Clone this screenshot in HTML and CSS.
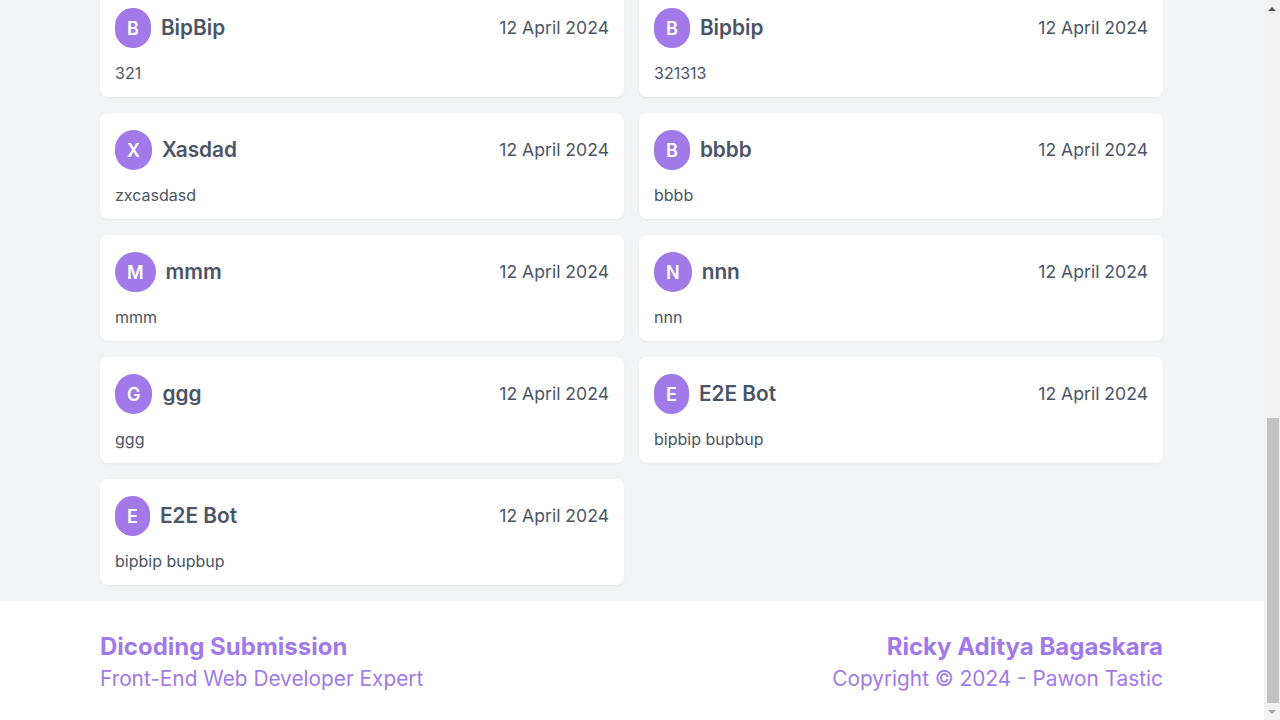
FILE: index.html
```html
<!DOCTYPE html>
<html lang="en">
<head>
<meta charset="utf-8">
<title>Threads</title>
<link rel="stylesheet" href="styles.css">
</head>
<body>
<header class="nav">
  <div class="nav-brand">Pawon Tastic</div>
  <nav class="nav-links"><a>Home</a><a>Threads</a><a>Login</a></nav>
</header>
<main class="main">
  <section class="intro">
    <h1 class="intro-title">Threads</h1>
    <form class="form-card">
      <label class="form-label">Nama</label>
      <input class="form-input" type="text" placeholder="Nama">
      <label class="form-label">Pesan</label>
      <textarea class="form-textarea" placeholder="Tulis pesan"></textarea>
      <button class="form-button" type="button">Kirim</button>
    </form>
  </section>
  <div class="grid">
    <article class="card"><div class="card-head"><span class="avatar">A</span><span class="card-name">Ayu</span><span class="card-date">12 April 2024</span></div><p class="card-text">halo semua</p></article>
    <article class="card"><div class="card-head"><span class="avatar">T</span><span class="card-name">Test</span><span class="card-date">12 April 2024</span></div><p class="card-text">test</p></article>
    <article class="card"><div class="card-head"><span class="avatar">Q</span><span class="card-name">qwe</span><span class="card-date">12 April 2024</span></div><p class="card-text">qwe</p></article>
    <article class="card"><div class="card-head"><span class="avatar">A</span><span class="card-name">asd</span><span class="card-date">12 April 2024</span></div><p class="card-text">asd</p></article>
    <article class="card"><div class="card-head"><span class="avatar">B</span><span class="card-name">BipBip</span><span class="card-date">12 April 2024</span></div><p class="card-text">321</p></article>
    <article class="card"><div class="card-head"><span class="avatar">B</span><span class="card-name">Bipbip</span><span class="card-date">12 April 2024</span></div><p class="card-text">321313</p></article>
    <article class="card"><div class="card-head"><span class="avatar">X</span><span class="card-name">Xasdad</span><span class="card-date">12 April 2024</span></div><p class="card-text">zxcasdasd</p></article>
    <article class="card"><div class="card-head"><span class="avatar">B</span><span class="card-name">bbbb</span><span class="card-date">12 April 2024</span></div><p class="card-text">bbbb</p></article>
    <article class="card"><div class="card-head"><span class="avatar">M</span><span class="card-name">mmm</span><span class="card-date">12 April 2024</span></div><p class="card-text">mmm</p></article>
    <article class="card"><div class="card-head"><span class="avatar">N</span><span class="card-name">nnn</span><span class="card-date">12 April 2024</span></div><p class="card-text">nnn</p></article>
    <article class="card"><div class="card-head"><span class="avatar">G</span><span class="card-name">ggg</span><span class="card-date">12 April 2024</span></div><p class="card-text">ggg</p></article>
    <article class="card"><div class="card-head"><span class="avatar">E</span><span class="card-name">E2E Bot</span><span class="card-date">12 April 2024</span></div><p class="card-text">bipbip bupbup</p></article>
    <article class="card"><div class="card-head"><span class="avatar">E</span><span class="card-name">E2E Bot</span><span class="card-date">12 April 2024</span></div><p class="card-text">bipbip bupbup</p></article>
  </div>
</main>
<footer class="footer">
  <div class="footer-left">
    <div class="footer-title">Dicoding Submission</div>
    <div class="footer-sub">Front-End Web Developer Expert</div>
  </div>
  <div class="footer-right">
    <div class="footer-title">Ricky Aditya Bagaskara</div>
    <div class="footer-sub">Copyright © 2024 - Pawon Tastic</div>
  </div>
</footer>
<div class="scrollbar" aria-hidden="true">
  <span class="scroll-arrow scroll-up"></span>
  <span class="scroll-track"><span class="scroll-thumb"></span></span>
  <span class="scroll-arrow scroll-down"></span>
</div>
<script src="script.js"></script>
</body>
</html>
```

FILE: styles.css
```css
* { box-sizing: border-box; }
html, body { margin: 0; padding: 0; }
body {
  background: #f3f4f6;
  font-family: Inter, "Liberation Sans", sans-serif;
  color: #4b5563;
  padding-right: 16px;
}
.nav {
  height: 64px;
  background: #ffffff;
  display: flex;
  align-items: center;
  justify-content: space-between;
  padding: 0 100px;
}
.nav-brand { font-size: 22px; font-weight: 700; color: #a179e8; }
.nav-links { display: flex; gap: 24px; font-size: 16px; }
.main { padding: 32px 101px 16px 100px; }
.intro { margin-bottom: 24px; }
.intro-title { margin: 0 0 16px; font-size: 30px; line-height: 40px; font-weight: 700; color: #374151; }
.form-card {
  background: #fff;
  border-radius: 8px;
  padding: 20px;
  display: flex;
  flex-direction: column;
  gap: 8px;
}
.form-label { font-size: 14px; font-weight: 600; }
.form-input, .form-textarea {
  font-family: inherit;
  font-size: 16px;
  border: 1px solid #d1d5db;
  border-radius: 6px;
  padding: 8px 12px;
}
.form-input { height: 40px; }
.form-textarea { height: 120px; resize: none; }
.form-button {
  align-self: flex-start;
  margin-top: 8px;
  background: #a179e8;
  color: #fff;
  border: 0;
  border-radius: 6px;
  padding: 10px 20px;
  font-family: inherit;
  font-size: 16px;
  font-weight: 600;
}
.grid {
  display: grid;
  grid-template-columns: 1fr 1fr;
  row-gap: 16px;
  column-gap: 15px;
}
.card {
  background: #ffffff;
  border-radius: 8px;
  box-shadow: 0 1px 2px rgba(0, 0, 0, 0.05);
  padding: 17px 15px 13px;
  height: 106px;
}
.card-head {
  display: flex;
  align-items: center;
  height: 40px;
}
.avatar {
  height: 40px;
  padding: 0 12px;
  border-radius: 9999px;
  background: #a179e8;
  color: #ffffff;
  font-size: 18px;
  font-weight: 600;
  display: flex;
  align-items: center;
  justify-content: center;
}
.card-name {
  margin-left: 10px;
  font-size: 20.8px;
  font-weight: 600;
  color: #4a5568;
  position: relative;
  top: -1px;
}
.card-date {
  margin-left: auto;
  font-size: 17.6px;
  color: #4a5568;
  position: relative;
  top: -1px;
}
.card-text {
  margin: 13px 0 0;
  font-size: 16px;
  line-height: 24px;
  color: #4b5563;
}
.footer {
  background: #ffffff;
  display: flex;
  justify-content: space-between;
  padding: 30px 101px 25px 100px;
  color: #a179e8;
}
.footer-right { text-align: right; }
.footer-title { font-size: 24px; line-height: 32px; font-weight: 700; }
.footer-sub { font-size: 20.8px; line-height: 32px; }
.scrollbar {
  position: fixed;
  top: 0;
  right: 0;
  width: 16px;
  height: 720px;
  background: #f1f1f1;
  display: flex;
  flex-direction: column;
  align-items: center;
}
.scroll-arrow {
  width: 16px;
  height: 17px;
  display: flex;
  align-items: center;
  justify-content: center;
  flex: none;
}
.scroll-up::before {
  content: "";
  border-left: 4px solid transparent;
  border-right: 4px solid transparent;
  border-bottom: 4px solid #505050;
}
.scroll-down::before {
  content: "";
  border-left: 4px solid transparent;
  border-right: 4px solid transparent;
  border-top: 4px solid #a3a3a3;
}
.scroll-track {
  flex: 1;
  width: 16px;
  display: flex;
  flex-direction: column;
  justify-content: flex-end;
  align-items: center;
}
.scroll-thumb {
  width: 12px;
  margin-left: 2px;
  height: 285px;
  background: #c1c1c1;
}
```

FILE: script.js
```js
function toBottom() {
  window.scrollTo(0, document.documentElement.scrollHeight);
}
toBottom();
window.addEventListener('load', toBottom);
```
